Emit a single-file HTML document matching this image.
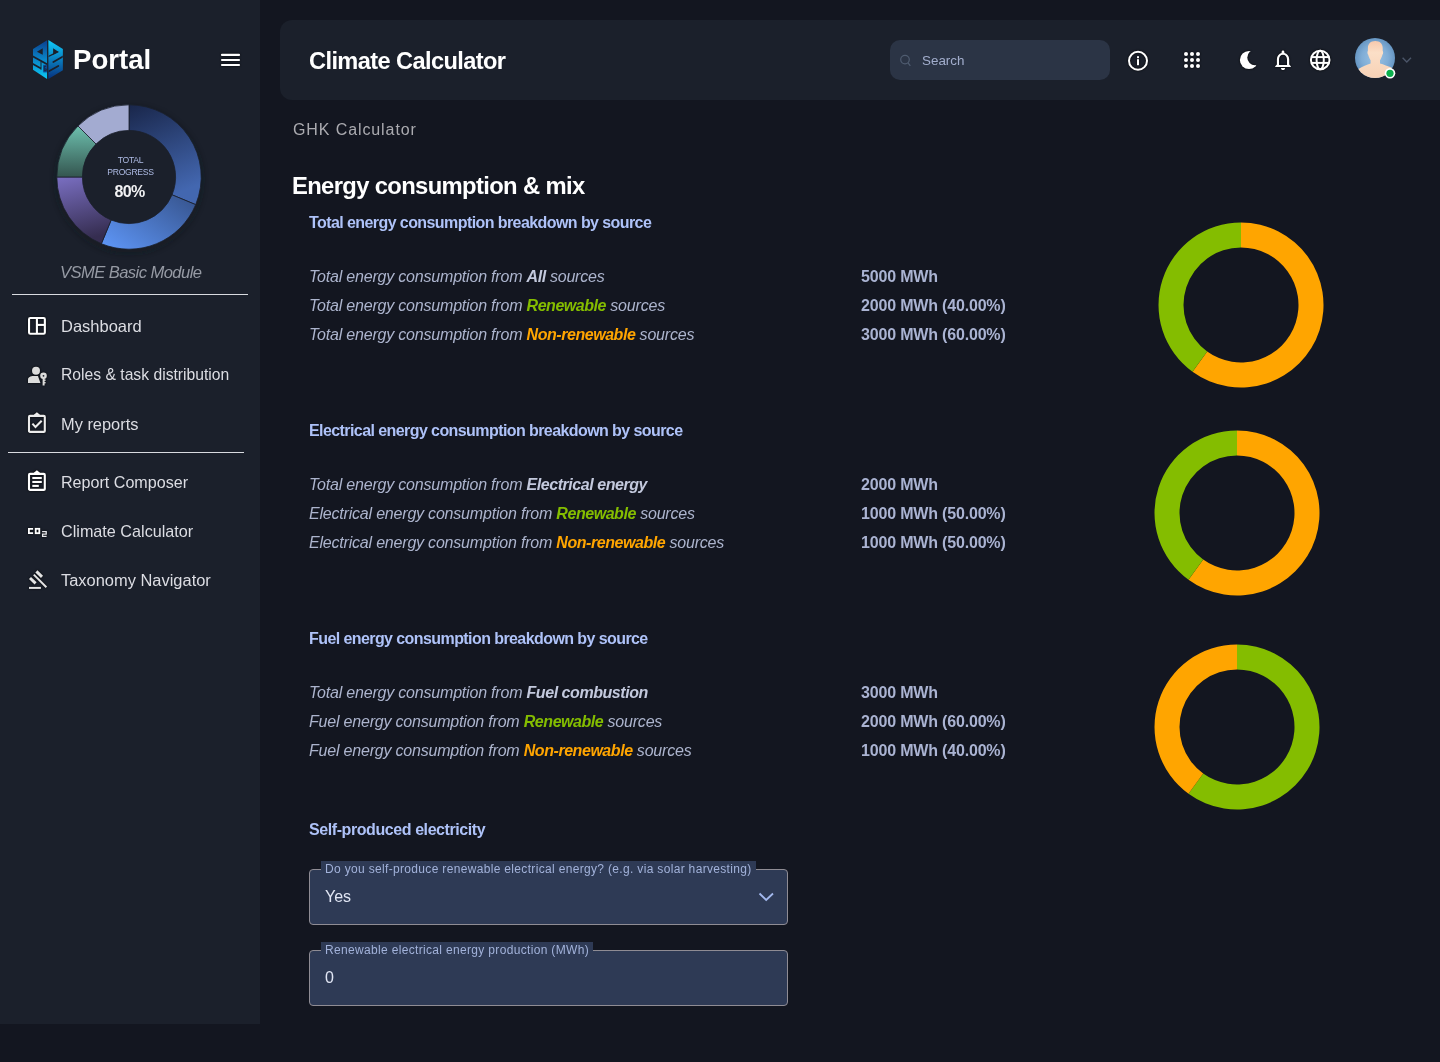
<!DOCTYPE html>
<html><head><meta charset="utf-8">
<style>
*{box-sizing:border-box;margin:0;padding:0}
html,body{width:1440px;height:1062px;overflow:hidden;background:#131620;font-family:"Liberation Sans",sans-serif}
.abs{position:absolute;overflow:visible}
#wrap{position:absolute;left:0;top:0;width:1440px;height:1062px;will-change:transform}
#sidebar{position:absolute;left:0;top:0;width:260px;height:1024px;background:#1b202b}
#header{position:absolute;left:280px;top:20px;width:1160px;height:80px;background:#1b202b;border-radius:12px 0 0 12px}
.t{position:absolute;white-space:nowrap;line-height:1}
.nav{position:absolute;left:61px;font-size:16.2px;color:#dcdde3;white-space:nowrap;line-height:20px}
.hline{position:absolute;height:1px;background:#d9dbe0}
.sec{position:absolute;left:309px;margin-top:0.5px;font-size:16px;letter-spacing:-0.58px;font-weight:bold;color:#aec2f8;white-space:nowrap;line-height:20px}
.row{position:absolute;left:309px;margin-top:1px;font-size:16px;letter-spacing:-0.2px;font-style:italic;color:#acb4cd;white-space:nowrap;line-height:20px}
.row b{color:#c3c9dd;letter-spacing:-0.45px}
.row b.g{color:#84bd00}
.row b.o{color:#ffa500}
.val{position:absolute;left:861px;margin-top:1px;font-size:16px;letter-spacing:-0.18px;font-weight:bold;color:#aab3d2;white-space:nowrap;line-height:20px}
.field{position:absolute;left:309px;width:479px;height:56px;background:#2e3a55;border:1px solid #8f8c94;border-radius:4px}
.flabel{position:absolute;left:11px;top:-9px;padding:0 4px;background:#2e3a55;font-size:12px;letter-spacing:0.33px;color:#a2b2da;white-space:nowrap;line-height:16px}
.fval{position:absolute;left:15px;top:17px;font-size:16px;color:#e1e6f4;line-height:20px}
.ico{position:absolute;overflow:visible}
.sh{filter:drop-shadow(0 0 1px rgba(0,0,0,0.9))}
</style></head>
<body><div id="wrap">
<div id="sidebar"></div>
<div id="header"></div>

<!-- logo -->
<svg class="ico" style="left:28px;top:36px" width="40" height="46" viewBox="0 0 923 1062">
  <defs>
    <linearGradient id="lgL" x1="0" y1="0" x2="0" y2="1"><stop offset="0" stop-color="#0a3f8e"/><stop offset="0.5" stop-color="#0a86c8"/><stop offset="1" stop-color="#0ccaf6"/></linearGradient>
    <linearGradient id="lgR" x1="0" y1="0" x2="0" y2="1"><stop offset="0" stop-color="#10cdfa"/><stop offset="0.45" stop-color="#0a86c6"/><stop offset="1" stop-color="#07307d"/></linearGradient>
    <clipPath id="cL"><polygon points="115,300 440,100 440,990 115,780"/></clipPath>
    <clipPath id="cR"><polygon points="470,95 805,300 805,790 470,990"/></clipPath>
  </defs>
  <polygon points="115,300 440,100 440,990 115,780" fill="url(#lgL)"/>
  <polygon points="470,95 805,300 805,790 470,990" fill="url(#lgR)"/>
  <g clip-path="url(#cL)" stroke="#1b202b" fill="#1b202b">
    <polygon points="205,365 340,280 340,430" stroke="none"/>
    <line x1="80" y1="455" x2="460" y2="665" stroke-width="40"/>
    <line x1="80" y1="625" x2="300" y2="750" stroke-width="40"/>
    <line x1="300" y1="590" x2="300" y2="780" stroke-width="22"/>
    <rect x="350" y="665" width="90" height="175" fill="#0a4a98" stroke="none"/>
    <path d="M420 700H375V800H420V760H395" fill="none" stroke-width="18"/>
  </g>
  <g clip-path="url(#cR)" stroke="#1b202b" fill="#1b202b" stroke-linecap="round">
    <polygon points="580,285 700,365 580,435" stroke="none"/>
    <line x1="460" y1="480" x2="700" y2="360" stroke-width="30" stroke-linecap="butt"/>
    <line x1="840" y1="452" x2="585" y2="602" stroke-width="40"/>
    <line x1="700" y1="690" x2="430" y2="845" stroke-width="40"/>
  </g>
</svg>
<div class="t" style="left:73px;top:44.5px;font-size:27.6px;font-weight:bold;color:#fff;line-height:30px">Portal</div>

<!-- hamburger -->
<svg class="ico sh" style="left:210px;top:45px" width="40" height="30" viewBox="0 0 40 30">
  <g stroke="#fff" stroke-width="2.2" stroke-linecap="round"><line x1="12" y1="9.9" x2="29" y2="9.9"/><line x1="12" y1="15" x2="29" y2="15"/><line x1="12" y1="20" x2="29" y2="20"/></g>
</svg>

<!-- sidebar donut -->
<svg class="ico" style="left:49px;top:96.5px" width="160" height="160" viewBox="0 0 160 160">
  <defs>
    <linearGradient id="g1" x1="0" y1="0" x2="0.3" y2="1"><stop offset="0" stop-color="#19264a"/><stop offset="1" stop-color="#4367b0"/></linearGradient>
    <linearGradient id="g2" x1="0" y1="1" x2="1" y2="0.2"><stop offset="0" stop-color="#5f98fa"/><stop offset="1" stop-color="#395894"/></linearGradient>
    <linearGradient id="g3" x1="0" y1="0" x2="0.2" y2="1"><stop offset="0" stop-color="#7a6fc2"/><stop offset="1" stop-color="#352d50"/></linearGradient>
    <linearGradient id="g4" x1="0" y1="0" x2="0" y2="1"><stop offset="0" stop-color="#6dc0ae"/><stop offset="1" stop-color="#34554f"/></linearGradient>
  </defs>
  <filter id="blr" x="-20%" y="-20%" width="140%" height="140%"><feGaussianBlur stdDeviation="3"/></filter><circle cx="80" cy="83" r="71" fill="none" stroke="#0f1218" stroke-width="5" opacity="0.45" filter="url(#blr)"/>
  <g stroke="#1b202b" stroke-width="0.8">
  <path d="M80.00 7.80A72.2 72.2 0 0 1 146.70 107.63L123.05 97.83A46.6 46.6 0 0 0 80.00 33.40Z" fill="url(#g1)"/>
  <path d="M146.70 107.63A72.2 72.2 0 0 1 52.37 146.70L62.17 123.05A46.6 46.6 0 0 0 123.05 97.83Z" fill="url(#g2)"/>
  <path d="M52.37 146.70A72.2 72.2 0 0 1 7.80 80.00L33.40 80.00A46.6 46.6 0 0 0 62.17 123.05Z" fill="url(#g3)"/>
  <path d="M7.80 80.00A72.2 72.2 0 0 1 28.95 28.95L47.05 47.05A46.6 46.6 0 0 0 33.40 80.00Z" fill="url(#g4)"/>
  <path d="M28.95 28.95A72.2 72.2 0 0 1 80.00 7.80L80.00 33.40A46.6 46.6 0 0 0 47.05 47.05Z" fill="#a3abd1"/>
  </g>
</svg>
<div class="t" style="left:80.5px;top:154px;width:100px;text-align:center;font-size:8.6px;letter-spacing:-0.3px;color:#aebbe4;line-height:12px">TOTAL<br>PROGRESS</div>
<div class="t" style="left:79.5px;top:183px;width:100px;text-align:center;font-size:16px;letter-spacing:-0.7px;font-weight:bold;color:#f2f2f4;line-height:18px">80%</div>

<div class="t" style="left:60px;top:263.5px;font-size:16.6px;letter-spacing:-0.58px;font-style:italic;color:#969aa4;line-height:18px">VSME Basic Module</div>
<div class="hline" style="left:12px;top:294px;width:236px"></div>
<div class="hline" style="left:8px;top:452px;width:236px"></div>

<!-- nav icons -->
<svg class="ico sh" style="left:24px;top:312px" width="28" height="28" viewBox="0 0 28 28">
  <g fill="none" stroke="#fff" stroke-width="2.1"><rect x="5.05" y="6" width="15.8" height="15.8" rx="1.2"/><line x1="12.9" y1="6" x2="12.9" y2="21.8"/><line x1="12.9" y1="12.9" x2="20.8" y2="12.9"/></g>
</svg>
<svg class="ico sh" style="left:24px;top:362px" width="28" height="28" viewBox="0 0 28 28">
  <g fill="#dcdcdc"><circle cx="12" cy="8.8" r="4"/><path d="M4 21.1V17.5C4 15.2 6.5 14 9.5 14H14C14.6 15.8 15.4 17.8 16.4 21.1Z"/></g>
  <g fill="#dcdcdc"><circle cx="19.5" cy="13.8" r="3.3"/><rect x="18.6" y="15" width="2" height="8.5"/><rect x="20" y="17.5" width="1.6" height="1.4"/><rect x="20" y="20" width="1.6" height="1.4"/></g>
  <circle cx="19.5" cy="13.8" r="0.9" fill="#1b202b"/>
</svg>
<svg class="ico sh" style="left:24px;top:408px" width="28" height="28" viewBox="0 0 28 28">
  <g fill="none" stroke="#ececec" stroke-width="2.1"><rect x="5" y="7.9" width="15.8" height="16" rx="1"/><path d="M10.5 7.5L12.9 5.5L15.3 7.5"/><path d="M8.4 15.6L11.5 19L17.7 12.7"/></g>
</svg>
<svg class="ico sh" style="left:24px;top:466px" width="28" height="28" viewBox="0 0 28 28">
  <g fill="none" stroke="#fff" stroke-width="2.1"><rect x="5" y="7.9" width="15.8" height="16" rx="1"/><path d="M10.5 7.5L12.9 5.5L15.3 7.5"/><line x1="8.3" y1="12" x2="17.8" y2="12"/><line x1="8.3" y1="15.95" x2="17.8" y2="15.95"/><line x1="8.3" y1="19.9" x2="14.8" y2="19.9"/></g>
</svg>
<svg class="ico sh" style="left:24px;top:518px" width="28" height="28" viewBox="0 0 28 28">
  <g fill="none" stroke="#fff" stroke-width="1.8"><path d="M9.1 10.8H4.9V15.2H9.1"/><rect x="11.7" y="10.8" width="3.6" height="4.4"/></g>
  <path d="M18.1 13.6H22.2V16.1H18.6V18.4H22.6" fill="none" stroke="#e8e8ec" stroke-width="1.3"/>
</svg>
<svg class="ico sh" style="left:24px;top:565px" width="28" height="28" viewBox="0 0 28 28">
  <g stroke="#e4e4e4" stroke-linecap="butt"><line x1="12.4" y1="6.4" x2="18" y2="11.8" stroke-width="3"/><line x1="6" y1="13" x2="11.6" y2="18.3" stroke-width="3"/><line x1="9.8" y1="9.6" x2="22.4" y2="22.2" stroke-width="2"/><line x1="5" y1="22.9" x2="16.9" y2="22.9" stroke-width="2"/></g>
</svg>

<div class="nav" style="top:316px;font-size:16.5px">Dashboard</div>
<div class="nav" style="top:365px;font-size:15.7px">Roles &amp; task distribution</div>
<div class="nav" style="top:414px;font-size:16.4px">My reports</div>
<div class="nav" style="top:472px;font-size:16.1px">Report Composer</div>
<div class="nav" style="top:521px">Climate Calculator</div>
<div class="nav" style="top:570px;font-size:16.45px">Taxonomy Navigator</div>

<!-- header -->
<div class="t" style="left:309px;top:47.5px;font-size:23.6px;letter-spacing:-0.6px;font-weight:bold;color:#fff;line-height:26px">Climate Calculator</div>
<div class="abs" style="left:890px;top:40px;width:220px;height:40px;background:#2b3445;border-radius:10px"></div>
<svg class="ico" style="left:890px;top:40px" width="30" height="40" viewBox="0 0 30 40">
  <g fill="none" stroke="#4f5c70" stroke-width="1.2"><circle cx="15" cy="19.6" r="4.3"/><line x1="18.1" y1="22.8" x2="20.3" y2="25.9"/></g>
</svg>
<div class="t" style="left:922px;top:52.8px;font-size:13.4px;color:#a2adcc;line-height:16px">Search</div>

<!-- info -->
<svg class="ico sh" style="left:1124px;top:46px" width="28" height="28" viewBox="0 0 28 28">
  <circle cx="14" cy="14.8" r="9" fill="none" stroke="#fff" stroke-width="2"/>
  <rect x="13" y="10.2" width="2" height="2" fill="#fff"/><rect x="13" y="13.2" width="2" height="6" fill="#fff"/>
</svg>
<!-- grid -->
<svg class="ico sh" style="left:1178px;top:46px" width="28" height="28" viewBox="0 0 28 28">
  <g fill="#fff"><circle cx="8" cy="8" r="2"/><circle cx="14" cy="8" r="2"/><circle cx="20" cy="8" r="2"/><circle cx="8" cy="14" r="2"/><circle cx="14" cy="14" r="2"/><circle cx="20" cy="14" r="2"/><circle cx="8" cy="20" r="2"/><circle cx="14" cy="20" r="2"/><circle cx="20" cy="20" r="2"/></g>
</svg>
<!-- moon -->
<svg class="ico sh" style="left:1234px;top:46px" width="28" height="28" viewBox="0 0 28 28">
  <defs><mask id="mm"><rect width="28" height="28" fill="#fff"/><circle cx="21" cy="11.5" r="7.7" fill="#000"/></mask></defs>
  <circle cx="15" cy="14" r="9.1" fill="#fff" mask="url(#mm)"/>
</svg>
<!-- bell -->
<svg class="ico sh" style="left:1269px;top:46px" width="28" height="28" viewBox="0 0 28 28">
  <g fill="#fff"><path d="M14 4.4C13.2 4.4 12.6 5.1 12.6 6V7.1C10 7.8 7.9 10.1 7.9 13.3V18.5L6.2 20.3V21H21.8V20.3L20.2 18.5V13.3C20.2 10.1 18 7.8 15.4 7.1V6C15.4 5.1 14.8 4.4 14 4.4ZM10 18.9V13.3C10 10.8 11.8 8.8 14 8.8S18 10.8 18 13.3V18.9Z"/><path d="M11.9 21.9H16.1C16.1 23.1 15.2 24 14 24S11.9 23.1 11.9 21.9Z"/></g>
</svg>
<!-- globe -->
<svg class="ico sh" style="left:1306px;top:46px" width="28" height="28" viewBox="0 0 28 28">
  <g fill="none" stroke="#fff" stroke-width="2"><circle cx="14.2" cy="14" r="9.3"/><ellipse cx="14.2" cy="14" rx="3.6" ry="9.3"/><line x1="5" y1="11.1" x2="23.4" y2="11.1"/><line x1="5" y1="16.9" x2="23.4" y2="16.9"/></g>
</svg>
<!-- avatar -->
<svg class="ico" style="left:1355px;top:38px" width="40" height="42" viewBox="0 0 40 42">
  <defs>
    <radialGradient id="av" cx="0.5" cy="0.5" r="0.55"><stop offset="0" stop-color="#9cc3e4"/><stop offset="0.6" stop-color="#80add6"/><stop offset="1" stop-color="#5f8fbd"/></radialGradient>
    <linearGradient id="sk" x1="0" y1="0" x2="0" y2="1"><stop offset="0" stop-color="#f7c9ad"/><stop offset="0.3" stop-color="#fbdfc7"/><stop offset="1" stop-color="#f7d0b4"/></linearGradient>
    <clipPath id="avc"><circle cx="20" cy="20" r="20"/></clipPath>
  </defs>
  <circle cx="20" cy="20" r="20" fill="url(#av)"/>
  <g clip-path="url(#avc)" fill="url(#sk)">
    <path d="M20.3 3C15.6 3 12.9 5.8 12.9 10V12.8C12.3 13.4 12.3 15.9 13.1 16.5C13.7 19 14.8 21 15.6 22.3V25.4C12.2 26.8 7.2 28.4 3.5 31L3 42H37L36.5 29.6C33 28 28.6 26.4 25 25.4V22.3C25.8 21 26.9 19 27.5 16.5C28.3 15.9 28.3 13.4 27.7 12.8V10C27.7 5.8 25 3 20.3 3Z"/>
  </g>
  <circle cx="35" cy="35.3" r="5.3" fill="#fff"/><circle cx="35" cy="35.3" r="3.6" fill="#0cb04d"/>
</svg>
<svg class="ico" style="left:1400px;top:54px" width="14" height="12" viewBox="0 0 14 12">
  <path d="M2.6 3.8L6.8 7.9L11 3.8" fill="none" stroke="#4b5568" stroke-width="1.4"/>
</svg>

<!-- content -->
<div class="t" style="left:293px;top:120.5px;font-size:16px;color:#ababb0;line-height:18px;letter-spacing:0.9px">GHK Calculator</div>
<div class="t" style="left:292px;top:172.5px;font-size:23.8px;letter-spacing:-0.65px;font-weight:bold;color:#fff;line-height:26px">Energy consumption &amp; mix</div>

<div class="sec" style="top:212px">Total energy consumption breakdown by source</div>
<div class="row" style="top:266px">Total energy consumption from <b>All</b> sources</div>
<div class="row" style="top:295px">Total energy consumption from <b class="g">Renewable</b> sources</div>
<div class="row" style="top:324px">Total energy consumption from <b class="o">Non-renewable</b> sources</div>
<div class="val" style="top:266px">5000 MWh</div>
<div class="val" style="top:295px">2000 MWh (40.00%)</div>
<div class="val" style="top:324px">3000 MWh (60.00%)</div>

<div class="sec" style="top:420px">Electrical energy consumption breakdown by source</div>
<div class="row" style="top:474px">Total energy consumption from <b>Electrical energy</b></div>
<div class="row" style="top:503px">Electrical energy consumption from <b class="g">Renewable</b> sources</div>
<div class="row" style="top:532px">Electrical energy consumption from <b class="o">Non-renewable</b> sources</div>
<div class="val" style="top:474px">2000 MWh</div>
<div class="val" style="top:503px">1000 MWh (50.00%)</div>
<div class="val" style="top:532px">1000 MWh (50.00%)</div>

<div class="sec" style="top:628px">Fuel energy consumption breakdown by source</div>
<div class="row" style="top:682px">Total energy consumption from <b>Fuel combustion</b></div>
<div class="row" style="top:711px">Fuel energy consumption from <b class="g">Renewable</b> sources</div>
<div class="row" style="top:740px">Fuel energy consumption from <b class="o">Non-renewable</b> sources</div>
<div class="val" style="top:682px">3000 MWh</div>
<div class="val" style="top:711px">2000 MWh (60.00%)</div>
<div class="val" style="top:740px">1000 MWh (40.00%)</div>

<svg class="abs" style="left:1151.2px;top:214.8px" width="180" height="180" viewBox="0 0 180 180"><path d="M90.00 7.50A82.5 82.5 0 1 1 41.51 156.74L56.20 136.52A57.5 57.5 0 1 0 90.00 32.50Z" fill="#ffa500"/><path d="M41.51 156.74A82.5 82.5 0 0 1 90.00 7.50L90.00 32.50A57.5 57.5 0 0 0 56.20 136.52Z" fill="#84bd00"/></svg>
<svg class="abs" style="left:1147.3px;top:423px" width="180" height="180" viewBox="0 0 180 180"><path d="M90.00 7.50A82.5 82.5 0 1 1 41.51 156.74L56.20 136.52A57.5 57.5 0 1 0 90.00 32.50Z" fill="#ffa500"/><path d="M41.51 156.74A82.5 82.5 0 0 1 90.00 7.50L90.00 32.50A57.5 57.5 0 0 0 56.20 136.52Z" fill="#84bd00"/></svg>
<svg class="abs" style="left:1147.3px;top:636.8px" width="180" height="180" viewBox="0 0 180 180"><path d="M90.00 7.50A82.5 82.5 0 1 1 41.51 156.74L56.20 136.52A57.5 57.5 0 1 0 90.00 32.50Z" fill="#84bd00"/><path d="M41.51 156.74A82.5 82.5 0 0 1 90.00 7.50L90.00 32.50A57.5 57.5 0 0 0 56.20 136.52Z" fill="#ffa500"/></svg>

<div class="sec" style="top:819px;letter-spacing:-0.42px">Self-produced electricity</div>

<div class="field" style="top:869px">
  <div class="flabel">Do you self-produce renewable electrical energy? (e.g. via solar harvesting)</div>
  <div class="fval">Yes</div>
  <svg class="ico" style="left:446px;top:21px" width="20" height="12" viewBox="0 0 20 12"><path d="M3.5 2.5L10.2 9L17 2.5" fill="none" stroke="#a3b8ee" stroke-width="1.8"/></svg>
</div>
<div class="field" style="top:950px">
  <div class="flabel">Renewable electrical energy production (MWh)</div>
  <div class="fval">0</div>
</div>

</div></body></html>
